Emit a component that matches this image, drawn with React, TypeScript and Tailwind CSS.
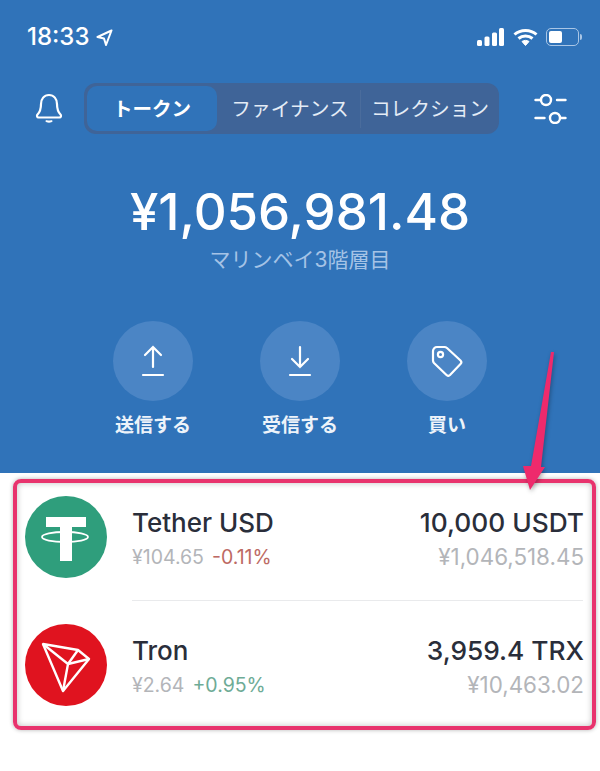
function StatusBar() {
  return (
    <div className="flex h-[74px] items-center justify-between pl-[27px] pr-[18px] text-white">
      <div className="flex items-center gap-[7px]">
        <span className="text-[24px] font-medium leading-none">18:33</span>
        <svg width="17" height="17" viewBox="0 0 17 17" fill="none" stroke="white" strokeWidth="2" strokeLinejoin="round">
          <path d="M15.5 1.5 1.5 8l6.5 1.5L10 16z" />
        </svg>
      </div>
      <div className="flex items-center gap-[8px]">
        <svg width="28" height="18" viewBox="0 0 28 18" fill="white">
          <rect x="0" y="12" width="5" height="6" rx="1.5" />
          <rect x="7.5" y="8.5" width="5" height="9.5" rx="1.5" />
          <rect x="15" y="4.5" width="5" height="13.5" rx="1.5" />
          <rect x="22" y="0" width="5" height="18" rx="1.5" />
        </svg>
        <svg width="25" height="18" viewBox="0 0 25 18" fill="none" stroke="white" strokeWidth="3">
          <path d="M1.5 6.5c6-5.5 16-5.5 22 0" />
          <path d="M5.5 10.5c4-3.5 10-3.5 14 0" />
          <path d="M12.5 17.5 9 13.5c2-1.5 5-1.5 7 0z" fill="white" strokeWidth="1" />
        </svg>
        <div className="flex items-center">
          <div className="h-[18px] w-[33px] rounded-[5px] border border-[#a9c6e6] p-[2px]">
            <div className="h-full w-[13px] rounded-[2px] bg-white" />
          </div>
          <div className="ml-[1px] h-[6px] w-[2px] rounded-r-sm bg-[#a9c6e6]" />
        </div>
      </div>
    </div>
  );
}

function Action({ label, children }: { label: string; children: React.ReactNode }) {
  return (
    <div className="flex w-[100px] flex-col items-center">
      <div className="flex h-[80px] w-[80px] items-center justify-center rounded-full bg-[#4b85c5]">{children}</div>
      <span className="mt-[12px] text-[19px] font-semibold leading-[26px] text-[#edf3fa]">{label}</span>
    </div>
  );
}

function TetherLogo() {
  return (
    <svg width="82" height="82" viewBox="0 0 82 82">
      <circle cx="41" cy="41" r="41" fill="#2f9e7c" />
      <path d="M21 21h40v10H47v34H35V31H21z" fill="white" />
      <ellipse cx="40" cy="41" rx="23" ry="5" fill="none" stroke="white" strokeWidth="1.8" />
    </svg>
  );
}

function TronLogo() {
  return (
    <svg width="82" height="82" viewBox="0 0 82 82">
      <circle cx="41" cy="41" r="41" fill="#e0131f" />
      <g fill="none" stroke="white" strokeWidth="2.4" strokeLinejoin="round">
        <path d="M18 20 53 26 64 35 38 67z" />
        <path d="M18 20 43 40 38 67" />
        <path d="M43 40 64 35" />
        <path d="M43 40 53 26" />
      </g>
    </svg>
  );
}

function TokenRow({ icon, name, price, change, changeColor, amount, value }: {
  icon: React.ReactNode;
  name: string;
  price: string;
  change: string;
  changeColor: string;
  amount: string;
  value: string;
}) {
  return (
    <div className="flex h-[128px] items-center pl-[25px]">
      {icon}
      <div className="ml-[25px] flex flex-1 items-center justify-between self-stretch pr-[16px] pt-[2px]">
        <div>
          <div className="text-[26px] font-medium leading-[32px] text-[#2a2e3a]">{name}</div>
          <div className="mt-[6px] flex gap-[8px] text-[19.5px] leading-[24px]">
            <span className="text-[#b3b5b9]">{price}</span>
            <span className={changeColor}>{change}</span>
          </div>
        </div>
        <div className="text-right">
          <div className="text-[26.3px] font-medium leading-[32px] text-[#2a2e3a]">{amount}</div>
          <div className="mt-[6px] text-[22.4px] leading-[24px] text-[#b3b5b9]">{value}</div>
        </div>
      </div>
    </div>
  );
}

export default function App() {
  return (
    <div className="relative h-[771px] w-[600px] overflow-hidden bg-white font-['Inter','Noto_Sans_CJK_JP',sans-serif]">
      <div className="h-[473px] bg-[#3073b9]">
        <StatusBar />
        <div className="mt-[9px] flex items-center pl-[35px] pr-[33px]">
          <svg width="28" height="31" viewBox="0 0 28 31" fill="none" stroke="white" strokeWidth="2.2" strokeLinejoin="round">
            <path d="M14 2C9 2 6 6 6 11c0 5-1 8-3.5 10.5-1 1-.5 3 1 3h21c1.5 0 2-2 1-3C23 19 22 16 22 11c0-5-3-9-8-9z" />
            <path d="M11 27.5c1 1.5 5 1.5 6 0" />
          </svg>
          <div className="ml-[21px] flex h-[51px] w-[415px] items-center rounded-[12px] bg-[#3f6498] p-[3px]">
            <div className="flex h-[45px] w-[130px] items-center justify-center rounded-[10px] bg-[#3073b9] pt-[2px] text-[19.5px] font-bold text-white">トークン</div>
            <div className="flex h-[38px] w-[143px] items-center justify-center pl-[3px] pt-[2px] text-[19.7px] text-[#e4ecf6]">ファイナンス</div>
            <div className="flex h-[38px] flex-1 items-center justify-center border-l border-[#4a6c9c] pl-[3px] pt-[2px] text-[19.7px] text-[#e4ecf6]">コレクション</div>
          </div>
          <svg className="ml-auto" width="33" height="30" viewBox="0 0 33 30" fill="none" stroke="white" strokeWidth="2.4" strokeLinecap="round">
            <circle cx="12" cy="6" r="5" />
            <circle cx="21" cy="24" r="5" />
            <path d="M1.5 6h4.5M23 6h8.5M1.5 24h9M27 24h4.5" />
          </svg>
        </div>
        <div className="mt-[48px] text-center text-[51px] font-medium leading-[60px] text-white">¥1,056,981.48</div>
        <div className="mt-[4px] text-center text-[21px] leading-[28px] text-[#a5c3e6]">マリンベイ3階層目</div>
        <div className="mt-[47px] flex justify-center gap-[47px]">
          <Action label="送信する">
            <svg width="30" height="32" viewBox="0 0 30 32" fill="none" stroke="white" strokeWidth="2.2" strokeLinecap="round">
              <path d="M15 22V2M7 10l8-8 8 8M5 30h20" />
            </svg>
          </Action>
          <Action label="受信する">
            <svg width="30" height="32" viewBox="0 0 30 32" fill="none" stroke="white" strokeWidth="2.2" strokeLinecap="round">
              <path d="M15 2v20M7 14l8 8 8-8M5 30h20" />
            </svg>
          </Action>
          <Action label="買い">
            <svg width="32" height="32" viewBox="0 0 32 32" fill="none" stroke="white" strokeWidth="2.2" strokeLinejoin="round">
              <path d="M2 6a4 4 0 0 1 4-4h7a4 4 0 0 1 3 1l13.5 12.5a2.5 2.5 0 0 1 0 3.5L19 30a2.5 2.5 0 0 1-3.5 0L3 18a4 4 0 0 1-1-3z" />
              <circle cx="9.5" cy="9.5" r="2.6" />
            </svg>
          </Action>
        </div>
      </div>

      <div>
        <TokenRow icon={<TetherLogo />} name="Tether USD" price="¥104.65" change="-0.11%" changeColor="text-[#bd6a64]" amount="10,000 USDT" value="¥1,046,518.45" />
        <div className="-mt-px ml-[132px] mr-[17px] h-px bg-[#e9eaec]" />
        <TokenRow icon={<TronLogo />} name="Tron" price="¥2.64" change="+0.95%" changeColor="text-[#6eab96]" amount="3,959.4 TRX" value="¥10,463.02" />
      </div>

      {/* annotation overlay */}
      <div className="absolute left-[13px] top-[479px] h-[251px] w-[583px] rounded-[8px] border-[4px] border-[#e8336d] shadow-[0_0_4px_rgba(0,0,0,0.3),inset_0_0_6px_rgba(0,0,0,0.25)]" />
      <svg className="absolute left-[515px] top-[345px] drop-shadow-[1px_2px_2px_rgba(0,0,0,0.3)]" width="50" height="150" viewBox="0 0 50 150">
        <path d="M36 7h3L26 122h4L15 145 8 121h8z" fill="#ee2a6c" />
      </svg>
    </div>
  );
}
